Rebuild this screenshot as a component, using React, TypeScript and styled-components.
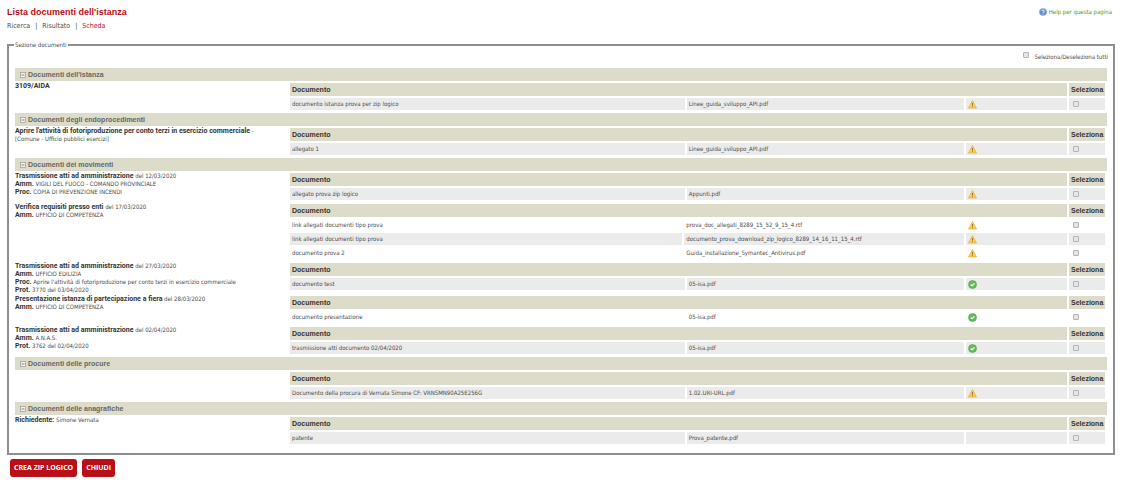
import React from 'react';
import styled, { createGlobalStyle } from 'styled-components';

const TEXT = '"DejaVu Sans Condensed", Tahoma, sans-serif';
const HEADING = '"Liberation Sans", Arial, sans-serif';

const GlobalStyle = createGlobalStyle`
  * { box-sizing: border-box; }
  body {
    margin: 0;
    background: #fff;
    color: #4a4a4a;
    font: 6px/8px ${TEXT};
  }
`;

const Page = styled.div`
  padding: 6px 7px 4px;
`;

const TopBar = styled.header`
  display: flex;
  justify-content: space-between;
  align-items: center;
`;

const Title = styled.h1`
  margin: 0;
  color: #c00d16;
  font: bold 9px/12px ${HEADING};
`;

const HelpLink = styled.a`
  display: flex;
  align-items: center;
  gap: 2px;
  padding-right: 3px;
  color: #4f9a0a;
  text-decoration: none;
`;

const Breadcrumb = styled.nav`
  display: flex;
  gap: 5px;
  margin-top: 2px;
  font-size: 7px;
  line-height: 12px;
`;

const Crumb = styled.a<{ $current?: boolean }>`
  color: ${p => (p.$current ? '#c00d16' : '#4a4a4a')};
  text-decoration: none;
`;

const Panel = styled.fieldset`
  min-width: 0;
  margin: 9px 0 0;
  padding: 3px 5px 6px 6px;
  border: 2px solid #8f8f8f;
`;

const Legend = styled.legend`
  padding: 0 1px;
  margin-left: -1px;
`;

const SelectAll = styled.label`
  display: flex;
  justify-content: flex-end;
  gap: 5px;
  margin-bottom: 6px;
  line-height: 10px;
`;

const CheckBox = styled.input.attrs({ type: 'checkbox' })`
  appearance: none;
  display: block;
  width: 6px;
  height: 6px;
  margin: 0;
  border: 1px solid #b4b4b4;
  border-radius: 1px;
  background: #e6e6e6;
  &:checked { background: #777; }
`;

const Section = styled.section`
  margin: 0 1px 1px 0;
`;

const SectionTitle = styled.h2`
  display: flex;
  align-items: center;
  gap: 2px;
  margin: 0;
  padding-left: 5px;
  background: #dddcca;
  color: #666;
  font: bold 7px/13px ${HEADING};
`;

const Toggle = styled.button`
  display: flex;
  padding: 0;
  border: 0;
  background: none;
`;

const Entry = styled.div`
  display: grid;
  grid-template-columns: 1fr 3fr;
  align-items: start;
`;

const Details = styled.div`
  padding-top: 1px;
  b {
    color: #333;
    font: bold 7px/8px Roboto, sans-serif;
  }
`;

const Line = styled.div`
  height: 8px;
  white-space: nowrap;
`;

const Documents = styled.table`
  width: 100%;
  table-layout: fixed;
  border-collapse: separate;
  border-spacing: 2px;
`;

const Col = styled.col<{ $width: string }>`
  width: ${p => p.$width};
`;

const Head = styled.th`
  height: 13px;
  padding: 0 2px;
  background: #dddcca;
  color: #333;
  font: bold 7px/13px ${HEADING};
  text-align: left;
`;

const Cell = styled.td<{ $shaded?: boolean }>`
  height: 12px;
  padding: 0 2px;
  background: ${p => (p.$shaded ? '#ebebeb' : 'transparent')};
  line-height: 12px;
  svg { display: block; }
`;

const BoxCell = styled(Cell)`
  padding-left: 4px;
`;

const Actions = styled.div`
  display: flex;
  gap: 5px;
  padding: 4px 3px 0;
`;

const ActionButton = styled.button`
  padding: 0 4px;
  border: 0;
  border-radius: 3px;
  background: #b90f17;
  color: #fff;
  font: bold 7px/18px "Open Sans", sans-serif;
`;

const Minus = () => (
  <svg width="6" height="6" viewBox="0 0 6 6">
    <rect x=".5" y=".5" width="5" height="5" fill="#f4f4f4" stroke="#a2a29c" strokeWidth=".8" />
    <path d="M1.5 3h3" stroke="#667" strokeWidth=".8" />
  </svg>
);

const Warning = () => (
  <svg width="9" height="9" viewBox="0 0 9 9" role="img" aria-label="Non firmato">
    <path d="M4.5.6 8.5 8H.5Z" fill="#fcd058" stroke="#e3ae45" strokeWidth=".8" strokeLinejoin="round" />
    <path d="M4.5 3v2.5M4.5 6.2v.9" stroke="#8a6420" strokeWidth=".9" />
  </svg>
);

const Valid = () => (
  <svg width="9" height="9" viewBox="0 0 9 9" role="img" aria-label="Valido">
    <circle cx="4.5" cy="4.5" r="4" fill="#66bd5c" stroke="#4ea54a" strokeWidth=".6" />
    <path d="M2.7 4.5 4 5.8l2.4-2.5" fill="none" stroke="#fff" strokeWidth="1.1" />
  </svg>
);

const Help = () => (
  <svg width="8" height="8" viewBox="0 0 8 8" aria-hidden="true">
    <circle cx="4" cy="4" r="3.6" fill="#5c8fcb" stroke="#8fb2dd" strokeWidth=".7" />
    <path d="M2.8 3.1c0-1.6 2.5-1.5 2.5 0C5.3 4 4 3.9 4 4.9M4 5.5v.9" fill="none" stroke="#fff" strokeWidth=".9" />
  </svg>
);

type Doc = { name: string; file: string; status?: 'warning' | 'valid' };
type EntryData = { details?: React.ReactNode[]; docs: Doc[]; shadeFrom?: 0 | 1; nameWidth?: string };
type SectionData = { title: string; entries: EntryData[] };

const sections: SectionData[] = [
  {
    title: "Documenti dell'istanza",
    entries: [{
      details: [<b>3109/AIDA</b>],
      docs: [{ name: 'documento istanza prova per zip logico', file: 'Linee_guida_sviluppo_API.pdf', status: 'warning' }],
    }],
  },
  {
    title: 'Documenti degli endoprocedimenti',
    entries: [{
      details: [
        <><b>Aprire l'attività di fotoriproduzione per conto terzi in esercizio commerciale</b> -</>,
        '[Comune - Ufficio pubblici esercizi]',
      ],
      docs: [{ name: 'allegato 1', file: 'Linee_guida_sviluppo_API.pdf', status: 'warning' }],
    }],
  },
  {
    title: 'Documenti dei movimenti',
    entries: [
      {
        details: [
          <><b>Trasmissione atti ad amministrazione</b> del 12/03/2020</>,
          <><b>Amm.</b> VIGILI DEL FUOCO - COMANDO PROVINCIALE</>,
          <><b>Proc.</b> COPIA DI PREVENZIONE INCENDI</>,
        ],
        docs: [{ name: 'allegato prova zip logico', file: 'Appunti.pdf', status: 'warning' }],
      },
      {
        details: [
          <><b>Verifica requisiti presso enti</b> del 17/03/2020</>,
          <><b>Amm.</b> UFFICIO DI COMPETENZA</>,
        ],
        shadeFrom: 1,
        nameWidth: '48.5%',
        docs: [
          { name: 'link allegati documenti tipo prova', file: 'prova_doc_allegati_8289_15_52_9_15_4.rtf', status: 'warning' },
          { name: 'link allegati documenti tipo prova', file: 'documento_prova_download_zip_logico_8289_14_16_11_15_4.rtf', status: 'warning' },
          { name: 'documento prova 2', file: 'Guida_installazione_Symantec_Antivirus.pdf', status: 'warning' },
        ],
      },
      {
        details: [
          <><b>Trasmissione atti ad amministrazione</b> del 27/03/2020</>,
          <><b>Amm.</b> UFFICIO EDILIZIA</>,
          <><b>Proc.</b> Aprire l'attività di fotoriproduzione per conto terzi in esercizio commerciale</>,
          <><b>Prot.</b> 3770 del 03/04/2020</>,
        ],
        docs: [{ name: 'documento test', file: '05-isa.pdf', status: 'valid' }],
      },
      {
        details: [
          <><b>Presentazione istanza di partecipazione a fiera</b> del 28/03/2020</>,
          <><b>Amm.</b> UFFICIO DI COMPETENZA</>,
        ],
        shadeFrom: 1,
        docs: [{ name: 'documento presentazione', file: '05-isa.pdf', status: 'valid' }],
      },
      {
        details: [
          <><b>Trasmissione atti ad amministrazione</b> del 02/04/2020</>,
          <><b>Amm.</b> A.N.A.S.</>,
          <><b>Prot.</b> 3762 del 02/04/2020</>,
        ],
        docs: [{ name: 'trasmissione atti documento 02/04/2020', file: '05-isa.pdf', status: 'valid' }],
      },
    ],
  },
  {
    title: 'Documenti delle procure',
    entries: [{
      docs: [{ name: 'Documento della procura di Vernata Simone CF: VRNSMN90A25E256G', file: '1.02.URI-URL.pdf', status: 'warning' }],
    }],
  },
  {
    title: 'Documenti delle anagrafiche',
    entries: [{
      details: [<><b>Richiedente:</b> Simone Vernata</>],
      docs: [{ name: 'patente', file: 'Prova_patente.pdf' }],
    }],
  },
];

const DocumentTable = ({ docs, shadeFrom = 0, nameWidth = '48.8%' }: EntryData) => (
  <Documents>
    <colgroup>
      <Col $width={nameWidth} />
      <Col $width="auto" />
      <Col $width="101px" />
      <Col $width="36px" />
    </colgroup>
    <thead>
      <tr>
        <Head colSpan={3}>Documento</Head>
        <Head>Seleziona</Head>
      </tr>
    </thead>
    <tbody>
      {docs.map((doc, i) => {
        const shaded = (i + shadeFrom) % 2 === 0;
        return (
          <tr key={i}>
            <Cell $shaded={shaded}>{doc.name}</Cell>
            <Cell $shaded={shaded}>{doc.file}</Cell>
            <Cell $shaded={shaded}>
              {doc.status === 'warning' && <Warning />}
              {doc.status === 'valid' && <Valid />}
            </Cell>
            <BoxCell $shaded={shaded}><CheckBox aria-label={`Seleziona ${doc.name}`} /></BoxCell>
          </tr>
        );
      })}
    </tbody>
  </Documents>
);

export default function App() {
  return (
    <Page>
      <GlobalStyle />
      <TopBar>
        <Title>Lista documenti dell'istanza</Title>
        <HelpLink href="#help"><Help />Help per questa pagina</HelpLink>
      </TopBar>
      <Breadcrumb>
        <Crumb href="#ricerca">Ricerca</Crumb>
        <span>|</span>
        <Crumb href="#risultato">Risultato</Crumb>
        <span>|</span>
        <Crumb href="#scheda" $current>Scheda</Crumb>
      </Breadcrumb>
      <Panel>
        <Legend>Sezione documenti</Legend>
        <SelectAll><CheckBox />Seleziona/Deseleziona tutti</SelectAll>
        {sections.map(section => (
          <Section key={section.title}>
            <SectionTitle>
              <Toggle type="button" aria-label={`Comprimi ${section.title}`}><Minus /></Toggle>
              {section.title}
            </SectionTitle>
            {section.entries.map((entry, i) => (
              <Entry key={i}>
                <Details>
                  {entry.details?.map((line, n) => <Line key={n}>{line}</Line>)}
                </Details>
                <DocumentTable {...entry} />
              </Entry>
            ))}
          </Section>
        ))}
      </Panel>
      <Actions>
        <ActionButton type="button">CREA ZIP LOGICO</ActionButton>
        <ActionButton type="button">CHIUDI</ActionButton>
      </Actions>
    </Page>
  );
}
